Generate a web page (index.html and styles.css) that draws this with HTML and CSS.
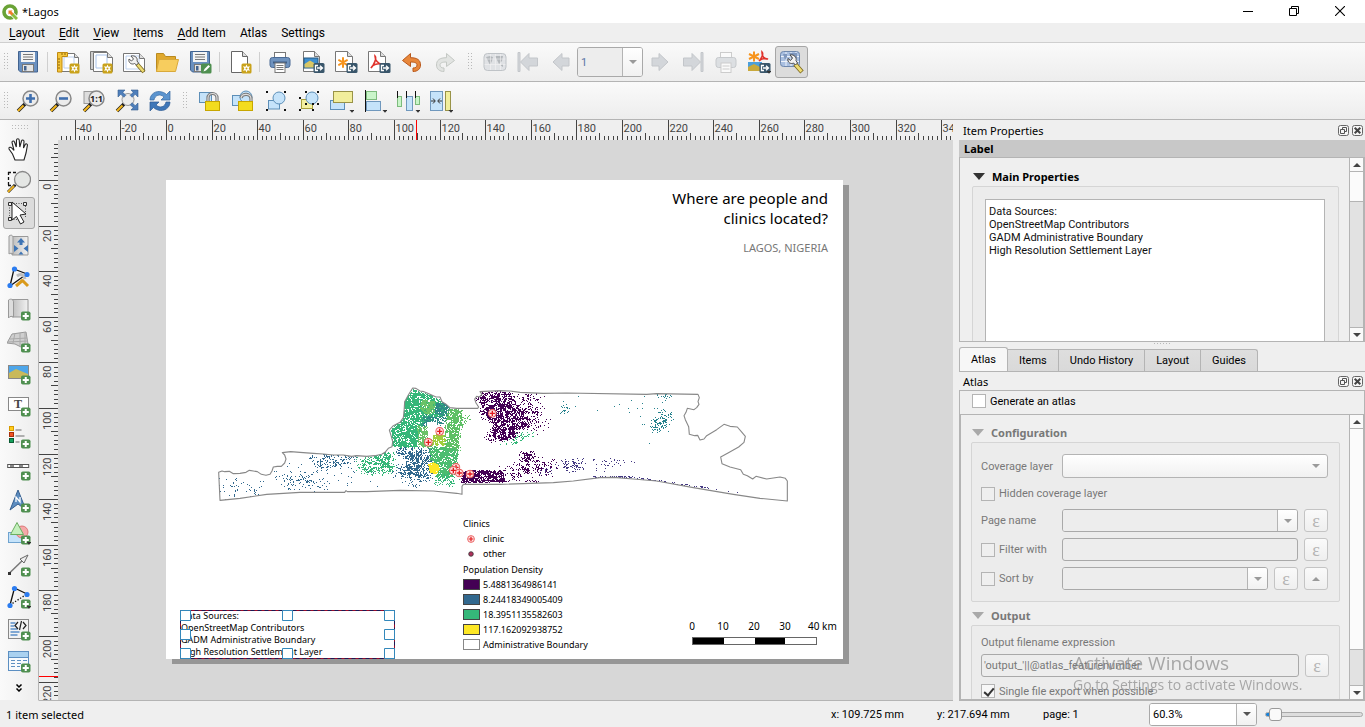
FILE: index.html
```html
<!DOCTYPE html>
<html lang="en">
<head>
<meta charset="utf-8">
<title>*Lagos</title>
<link rel="stylesheet" href="styles.css">
</head>
<body>
<svg class="sprite" aria-hidden="true">
  <defs>
    <linearGradient id="gPaper" x1="0" y1="0" x2="1" y2="0"><stop offset="0" stop-color="#bdbdbd"/><stop offset="1" stop-color="#f2f2f2"/></linearGradient>
    <path id="boundary" transform="translate(-14 -10) scale(.333333)" d="M56 292L66 288 74 290 88 289 100 296 120 295 138 292 148 286 160 288 172 290 184 298 198 301 210 298 216 288 220 276 232 274 244 274 254 264 258 252 254 240 247 233 272 230 300 232 340 235 370 237 400 240 430 240 455 244 470 242 500 244 524 242 545 238 555 232 565 220 576 215 578 200 574 185 568 165 580 152 600 142 610 128 612 110 614 80 625 60 638 39 648 40 660 48 672 50 690 58 708 66 720 66 726 80 736 86 750 98 770 100 833 100 836 96 828 84 824 72 830 64 838 66 846 58 840 50 900 47 930 48 960 52 1030 55 1100 54 1340 58 1370 56 1494 58 1498 68 1494 80 1497 88 1490 98 1482 104 1462 100 1458 112 1452 122 1456 134 1466 155 1468 178 1484 182 1493 181 1500 195 1512 192 1520 182 1550 164 1572 148 1590 154 1612 156 1624 170 1636 184 1632 202 1616 216 1584 234 1562 246 1566 266 1590 276 1622 284 1630 298 1642 302 1658 312 1668 304 1700 312 1740 306 1756 310 1762 318 1762 378 1680 370 1600 358 1480 338 1370 318 1300 312 1240 307 1200 308 1120 318 1060 323 900 328 790 328 786 334 786 358 770 355 700 348 600 346 500 350 442 350 438 347 434 352 300 352 200 358 120 370 60 376z"/>
    <clipPath id="land"><use href="#boundary"/></clipPath>
  </defs>
  <symbol id="b-new" viewBox="0 0 24 24"><rect x="13.500" y="13.500" width="10" height="10" rx="1.500" fill="#c9a21a"/><path d="M18.500 14.500l1 2.200 2.500-.5-1.300 2.300 1.300 2.200-2.500-.4-1 2.300-1-2.300-2.500.4 1.300-2.200-1.300-2.300 2.500.5z" fill="#fff"/><circle cx="18.500" cy="18.500" r="1" fill="#c9a21a"/></symbol>
  <symbol id="b-exp" viewBox="0 0 24 24"><rect x="12.500" y="13" width="11" height="10" rx="1.500" fill="#39566b"/><path d="M17 15.500h-2.500v5H17M16 18h5.500M19 15.800l2.500 2.200-2.500 2.200" fill="none" stroke="#fff" stroke-width="1.300"/></symbol>
  <symbol id="b-plus" viewBox="0 0 24 24"><rect x="14" y="14.500" width="9.500" height="9" rx="1.800" fill="#4f8f50"/><path d="M18.750 16v6M15.700 19h6.100" stroke="#fff" stroke-width="2"/></symbol>
  <symbol id="b-drop" viewBox="0 0 24 24"><path d="M19.500 21h5l-2.500 2.700z" fill="#333"/></symbol>
  <symbol id="b-mag" viewBox="0 0 24 24"><path d="M9 15l-7 7" stroke="#222" stroke-width="3.600"/><path d="M7.500 16.500L2 22" stroke="#f2b51d" stroke-width="2.200"/><circle cx="14.500" cy="9.500" r="7.500" fill="#ececec" stroke="#888" stroke-width="1.500"/></symbol>

  <symbol id="save" viewBox="0 0 24 24"><path d="M2.500 1.500h19v20.500H4.500l-2-2z" fill="#6a90c0" stroke="#42638f"/><rect x="5" y="2" width="14" height="10" fill="#f4f4f4"/><path d="M7 4.500h10M7 7h10M7 9.500h10" stroke="#777"/><rect x="6.500" y="14.500" width="11" height="7" fill="#e4e4e4" stroke="#777"/><rect x="8" y="16" width="2.500" height="4.500" fill="#42638f"/></symbol>
  <symbol id="newlayout" viewBox="0 0 24 24"><path d="M3.500 3.500h15l4 4v14h-19z" fill="#fff" stroke="#777"/><path d="M8 7h10v11H8z" fill="none" stroke="#bcd0ee"/><path d="M18.500 3.500v4h4" fill="#ddd" stroke="#777"/><path d="M1.500 2.500h10v4h-5.500v15.500h-4.500z" fill="#f4c63c" stroke="#c08a10"/><path d="M2 9h2M2 12h2M2 15h2M2 18h2M6 3v2M9 3v2" stroke="#8d670b"/><use href="#b-new"/></symbol>
  <symbol id="dup" viewBox="0 0 24 24"><path d="M1.500 1.500h16v18h-16z" fill="#ccc" stroke="#777"/><path d="M4.500 2.500h14l5 5v14h-19z" fill="#fff" stroke="#777"/><path d="M7 5h11v13H7z" fill="none" stroke="#a9c3ea"/><path d="M18.500 2.500v5h5" fill="#ddd" stroke="#777"/><use href="#b-new"/></symbol>
  <symbol id="manager" viewBox="0 0 24 24"><path d="M1.500 3.500h16l5 5v13h-21z" fill="#fff" stroke="#777"/><path d="M4 6h13v13H4z" fill="none" stroke="#bcd0ee"/><path d="M17.500 3.500v5h5" fill="#ddd" stroke="#777"/><path d="M15 14l7 8" stroke="#7c6820" stroke-width="4"/><path d="M15.500 14.500l6 7" stroke="#eedc72" stroke-width="2.500"/><path d="M9 6l2.500 3-2 2L7 9c-1 4 3 6 5.500 4.500l2 1.500 2-2-1.500-2c1-3-2-6-6-5z" fill="#f2f2f2" stroke="#555"/></symbol>
  <symbol id="open" viewBox="0 0 24 24"><path d="M1.500 21.500v-18h7l2 3h10v5" fill="#e0a92e" stroke="#b98a20"/><path d="M4 9.500h19.500l-3 12h-19z" fill="#f7cd5e" stroke="#d9a93a"/></symbol>
  <symbol id="saveas" viewBox="0 0 24 24"><use href="#save"/><rect x="13" y="13.500" width="10.500" height="10" rx="1.500" fill="#4f8f50"/><path d="M15.500 21.500l1-2.500 4-4 1.500 1.500-4 4z" fill="#fff"/></symbol>
  <symbol id="newpage" viewBox="0 0 24 24"><path d="M3.500 1.500h11l5 5v16h-16z" fill="#fff" stroke="#666"/><path d="M14.500 1.500v5h5" fill="#ddd" stroke="#666"/><use href="#b-new"/></symbol>
  <symbol id="print" viewBox="0 0 24 24"><rect x="6.500" y="2.500" width="11" height="6" fill="#fff" stroke="#777"/><rect x="2" y="7.500" width="20" height="10" rx="2.500" fill="#6f93bf" stroke="#4a6a95"/><path d="M5 12.500h14" stroke="#3f5d85" stroke-width="2"/><rect x="7" y="13" width="10" height="9.500" fill="#fff" stroke="#777"/><path d="M8.500 15.500h7M8.500 17.500h7M8.500 19.500h7" stroke="#777"/></symbol>
  <symbol id="eximg" viewBox="0 0 24 24"><path d="M2.500 1.500h11l5 5v15h-16z" fill="#fff" stroke="#777"/><path d="M13.500 1.500v5h5" fill="#ddd" stroke="#777"/><rect x="3" y="8" width="14" height="10" fill="#3e8fd0" stroke="#27587f"/><path d="M3.500 17.500v-3.500l5.500-3.500 7.500 4.500v2.500z" fill="#d9c765"/><use href="#b-exp"/></symbol>
  <symbol id="exsvg" viewBox="0 0 24 24"><path d="M1.500 1.500h12l5 5v15h-17z" fill="#fff" stroke="#777"/><path d="M13.500 1.500v5h5" fill="#ddd" stroke="#777"/><path d="M9 8v9M5 10.200l8 4.600M5 14.800l8-4.600" stroke="#f7941d" stroke-width="2" stroke-linecap="round"/><use href="#b-exp"/></symbol>
  <symbol id="expdf" viewBox="0 0 24 24"><path d="M1.500 1.500h12l5 5v15h-17z" fill="#fff" stroke="#777"/><path d="M13.500 1.500v5h5" fill="#ddd" stroke="#777"/><path d="M8 6c2 2-1 9-4 12 1-3 6-5 11-4-4 0-7-4-7-8z" fill="none" stroke="#e0332c" stroke-width="1.600"/><use href="#b-exp"/></symbol>
  <symbol id="undo" viewBox="0 0 24 24"><path d="M2.500 10.500l8-7v4.200c7 0 10 2.500 10 7.300 0 4-3 6.500-7.500 6.500v-3.500c2.500 0 4-1 4-3s-2-3-6.500-3v4.500z" fill="#e8873b" stroke="#b9581b"/></symbol>
  <symbol id="redo" viewBox="0 0 24 24"><path d="M21.500 10.500l-8-7v4.200c-7 0-10 2.500-10 7.300 0 4 3 6.500 7.500 6.500v-3.500c-2.500 0-4-1-4-3s2-3 6.500-3v4.500z" fill="#e2e4e2" stroke="#c4c8c4"/></symbol>
  <symbol id="atlasprev" viewBox="0 0 24 24"><rect x="1" y="3.500" width="22" height="17" rx="3.500" fill="#e0e2e5" stroke="#bfc3c7"/><path d="M3 7l4-1 3 1-1 4-2 4-2-4zM12 6h8l-1 5-3 3-2-4zM17 15l3-1v3z" fill="#b4b8bc"/><path d="M7.500 4v16M12.500 4v16M17.500 4v16M1.500 9h21M1.500 14.500h21" stroke="#f3f3f3" stroke-width=".6"/></symbol>
  <symbol id="first" viewBox="0 0 24 24"><path d="M2 2.500h2v19H2z" fill="#d3d6da" stroke="#c3c6ca"/><path d="M4.500 12L13 3.500V8h8.500v8H13v4.500z" fill="#d3d6da" stroke="#c3c6ca"/></symbol>
  <symbol id="prev" viewBox="0 0 24 24"><path d="M4 12l9-8.500V8h7v8h-7v4.500z" fill="#d3d6da" stroke="#c3c6ca"/></symbol>
  <symbol id="next" viewBox="0 0 24 24"><path d="M20 12l-9-8.500V8H4v8h7v4.500z" fill="#d3d6da" stroke="#c3c6ca"/></symbol>
  <symbol id="last" viewBox="0 0 24 24"><path d="M20 2.500h2v19h-2z" fill="#d3d6da" stroke="#c3c6ca"/><path d="M19.500 12L11 3.500V8H2.500v8H11v4.500z" fill="#d3d6da" stroke="#c3c6ca"/></symbol>
  <symbol id="printoff" viewBox="0 0 24 24"><rect x="6.500" y="2.500" width="11" height="6" fill="#fafafa" stroke="#ccc"/><rect x="2" y="7.500" width="20" height="10" rx="2.500" fill="#dcdfe2" stroke="#c6c9cc"/><rect x="7" y="13" width="10" height="9.500" fill="#fafafa" stroke="#ccc"/><path d="M8.500 16h7M8.500 19h7" stroke="#ccc"/></symbol>
  <symbol id="exatlas" viewBox="0 0 24 24"><path d="M7 1.500v10M2 4l10 5M2 9l10-5" stroke="#f7941d" stroke-width="2"/><path d="M15 2c2 2-1 7-3 9 2-2 6-3 9-2-4 0-6-3-6-7z" fill="none" stroke="#e0332c" stroke-width="1.600"/><rect x="1" y="12" width="14" height="9" fill="#4b9fdc"/><path d="M1 21v-4l6-3 8 4v3z" fill="#c9a93c"/><use href="#b-exp"/><use href="#b-drop"/></symbol>
  <symbol id="atlasset" viewBox="0 0 24 24"><rect x=".5" y="1.500" width="19" height="15" rx="3" fill="#a9bfe0" stroke="#6f88ad"/><path d="M6 2v14M11 2v14M16 2v14M1 6.500h18M1 11.500h18" stroke="#eef3fa"/><path d="M3 4l4 0 0 3-2 3zM9 3h8v5l-4 3z" fill="#7f97bd"/><path d="M15 14l7 8" stroke="#7c6820" stroke-width="4.500"/><path d="M15.500 14.500l6 7" stroke="#eedc72" stroke-width="2.800"/><path d="M10 5l2.500 3-2 2.500L8 8.500c-1 4 3 6 5.500 4.500l2 2 2-2-1.500-2.500c1-3-2-6.500-6-5.500z" fill="#f2f2f2" stroke="#444"/></symbol>

  <symbol id="zin" viewBox="0 0 24 24"><use href="#b-mag"/><path d="M14.500 5v9M10 9.500h9" stroke="#3f6fae" stroke-width="2.600"/></symbol>
  <symbol id="zout" viewBox="0 0 24 24"><use href="#b-mag"/><path d="M10 9.500h9" stroke="#3f6fae" stroke-width="2.600"/></symbol>
  <symbol id="z11" viewBox="0 0 24 24"><rect x="2" y="2.500" width="13" height="12" fill="#ddd" stroke="#999"/><use href="#b-mag"/><text x="14.500" y="13" text-anchor="middle" font-family="Noto Sans, sans-serif" font-size="9" font-weight="700" fill="#222">1:1</text></symbol>
  <symbol id="zfull" viewBox="0 0 24 24"><path d="M9 15l-7 7" stroke="#222" stroke-width="3.600"/><path d="M7.500 16.500L2 22" stroke="#f2b51d" stroke-width="2.200"/><circle cx="13" cy="10.500" r="6" fill="#ececec" stroke="#999"/><g fill="#4f7fbb" stroke="#335c8f" stroke-width=".6"><path d="M3 1h7L7.800 3.300l3 3-2 2-3-3L3 8z"/><path d="M23 1h-7l2.200 2.300-3 3 2 2 3-3L23 8z"/><path d="M23 21h-7l2.200-2.300-3-3 2-2 3 3L23 14z"/></g></symbol>
  <symbol id="refresh" viewBox="0 0 24 24"><path d="M2 11c0-6 6-10 12-8 2 .5 3.500 1.500 4.500 2.500L22 2v9h-9l3-3C12 4.500 7 6 6 11z" fill="#5b94cf" stroke="#3568a2" stroke-width=".7"/><path d="M22 13c0 6-6 10-12 8-2-.5-3.500-1.500-4.500-2.500L2 22v-9h9l-3 3c4 3.500 9 2 10-3z" fill="#3f77b8" stroke="#2c5a92" stroke-width=".7"/></symbol>
  <symbol id="lock" viewBox="0 0 24 24"><rect x="1.500" y="3.500" width="12" height="10" fill="#c5e3fa" stroke="#5d8fb8"/><path d="M10 13v-4c0-6 9-6 9 0v4" fill="none" stroke="#777" stroke-width="3.200"/><path d="M10 13v-4c0-6 9-6 9 0v4" fill="none" stroke="#ddd" stroke-width="1.200"/><rect x="7.500" y="12.500" width="14" height="9" fill="#f3dc1f" stroke="#c7a600"/></symbol>
  <symbol id="unlock" viewBox="0 0 24 24"><rect x="1.500" y="6.500" width="11" height="10" fill="#c5e3fa" stroke="#5d8fb8"/><circle cx="15" cy="8" r="6" fill="#c5e3fa" stroke="#5d8fb8"/><path d="M10 9c1-5 10-5 10 1v3" fill="none" stroke="#777" stroke-width="3.200"/><path d="M10 9c1-5 10-5 10 1v3" fill="none" stroke="#ddd" stroke-width="1.200"/><rect x="7.500" y="12.500" width="14" height="9" fill="#f3dc1f" stroke="#c7a600"/></symbol>
  <symbol id="group" viewBox="0 0 24 24"><rect x="4.500" y="11.500" width="11" height="8.500" fill="#c5e3fa" stroke="#5d8fb8"/><circle cx="15" cy="9" r="6" fill="#c5e3fa" stroke="#5d8fb8"/><path d="M2 2h2v2H2zM20 2h2v2h-2zM2 20h2v2H2zM20 20h2v2h-2z" fill="#111"/></symbol>
  <symbol id="ungroup" viewBox="0 0 24 24"><rect x="4.500" y="10.500" width="11" height="9" fill="#f4f0a0" stroke="#a79f3c"/><circle cx="15" cy="9" r="6" fill="#c5e3fa" stroke="#5d8fb8"/><path d="M2 8h2v2H2zM8 2h2v2H8zM20 2h2v2h-2zM2 20h2v2H2zM15 20h2v2h-2zM20 14h2v2h-2zM15 14h2v2h-2zM8 14h2v2H8z" fill="#111"/></symbol>
  <symbol id="raise" viewBox="0 0 24 24"><rect x=".5" y="11.500" width="14" height="9" fill="#c5e3fa" stroke="#5d8fb8"/><rect x="3.500" y="2.500" width="19" height="11" fill="#f2ee9c" stroke="#999348"/><use href="#b-drop"/></symbol>
  <symbol id="align" viewBox="0 0 24 24"><rect x="3.500" y="2.500" width="10" height="8" fill="#c9f5c9" stroke="#7dbb7d"/><rect x="3.500" y="12.500" width="14" height="9" fill="#c5e3fa" stroke="#7098bd"/><path d="M2.500 1v22" stroke="#111"/><use href="#b-drop"/></symbol>
  <symbol id="distribute" viewBox="0 0 24 24"><rect x="1.500" y="7.500" width="4" height="10" fill="#c9f5c9" stroke="#7dbb7d"/><rect x="10.500" y="7.500" width="6" height="14" fill="#c5e3fa" stroke="#7098bd"/><rect x="19.500" y="7.500" width="4" height="8" fill="#c9f5c9" stroke="#7dbb7d"/><path d="M1.500 2v7M10.500 2v7M19.500 2v7" stroke="#111"/><use href="#b-drop"/></symbol>
  <symbol id="resize" viewBox="0 0 24 24"><rect x="1.500" y="2.500" width="12" height="19" fill="#c5e3fa" stroke="#7098bd"/><rect x="16.500" y="2.500" width="5" height="19" fill="#f2ee9c" stroke="#999348"/><path d="M2 12h4M4 9.500L6.300 12 4 14.500M13 12H9M11 9.500L8.700 12l2.300 2.500" fill="none" stroke="#333"/><use href="#b-drop"/></symbol>

  <symbol id="pan" viewBox="0 0 24 24"><path d="M8 23l-2.500-6-3.500-5c-.5-1.800 1.600-2.300 2.700-1L7 13.500 5 5.500c-.2-1.700 2-2 2.500-.5L9.300 10 9.500 3c.2-1.700 2.500-1.700 2.700 0L12.800 10l1.700-6c.5-1.500 2.600-1.200 2.500.5L16.500 11l1.700-3.500c.8-1.300 2.500-.6 2.200.9L19 16l-2 7z" fill="#fff" stroke="#222" stroke-width="1.100"/></symbol>
  <symbol id="zoomt" viewBox="0 0 24 24"><path d="M1 3.500h10M1.500 3v14M1 16.500h8" stroke="#111" stroke-width="1.300" stroke-dasharray="3 2"/><path d="M8 16l-7 7" stroke="#333" stroke-width="3"/><path d="M7 17l-6 6" stroke="#f2b51d" stroke-width="1.800"/><circle cx="15.500" cy="10.500" r="8" fill="#e4e6e4" stroke="#888" stroke-width="1.300"/></symbol>
  <symbol id="select" viewBox="0 0 24 24"><path d="M4 2.500h15M4 18.500h12M2.500 4v14M18.500 5v11" stroke="#555" stroke-dasharray="1 1.500"/><path d="M1.500 1.500h3v3h-3zM16.500 1.500h3v3h-3zM1.500 16.500h3v3h-3z" fill="#eee" stroke="#333"/><path d="M5 1l14 12-6 1 4 7-3.500 2-4-7.500L5 19z" fill="#fff" stroke="#222"/></symbol>
  <symbol id="movec" viewBox="0 0 24 24"><path d="M5 3.500h16v18.500H5z" fill="url(#gPaper)" stroke="#999"/><path d="M2 3c3-2 4 0 4 2v16c-1-1-3-1-4 0z" fill="#ddd" stroke="#999"/><g fill="#3d74b5"><path d="M14 5l4 4.500h-2.500v2.500h-3V9.500H10zM7 12l4.500 3.500L7 19zM21 12l-4.500 3.500L21 19zM11.500 21.500l2.500-3 2.500 3z"/></g></symbol>
  <symbol id="nodes" viewBox="0 0 24 24"><path d="M7 4L3 21M7 4l13 5M3 21L17 11" stroke="#111" stroke-width="1.300" fill="none"/><path d="M21 21l-6-6M9 21l7-6" stroke="#d99a1c" stroke-width="3"/><path d="M10 11c4-3 7-1 8 3" stroke="#bbb" stroke-width="3" fill="none"/><g fill="#2b7cf0"><circle cx="7.500" cy="4" r="2.600"/><circle cx="20" cy="9.500" r="2.600"/><circle cx="3" cy="20.500" r="2.600"/></g></symbol>
  <symbol id="addmap" viewBox="0 0 24 24"><path d="M5 2.500h16V20H5z" fill="url(#gPaper)" stroke="#999"/><path d="M1.500 3c3-2 5 0 5 2v15c-1-1-4-1-5 1z" fill="#ddd" stroke="#999"/><use href="#b-plus"/></symbol>
  <symbol id="add3d" viewBox="0 0 24 24"><path d="M0 14l5-9 14-2 2 12-7 3-6-3z" fill="#cfcfcf" stroke="#999"/><path d="M3 10l17-1M8 4l-2 10M13 4v13M18 4v13M1 13l20-1" stroke="#aaa" fill="none"/><use href="#b-plus"/></symbol>
  <symbol id="addimg" viewBox="0 0 24 24"><rect x="1.500" y="4.500" width="20" height="13" fill="#4ea6ea" stroke="#888"/><path d="M2 17v-5l7-4 12 5v4z" fill="#c9b95a"/><use href="#b-plus"/></symbol>
  <symbol id="addlabel" viewBox="0 0 24 24"><rect x="1.500" y="4.500" width="20" height="13" fill="#fff" stroke="#888"/><text x="11" y="15" text-anchor="middle" font-family="Liberation Serif, serif" font-size="12" font-weight="700" fill="#444">T</text><use href="#b-plus"/></symbol>
  <symbol id="addlegend" viewBox="0 0 24 24"><rect x="2.500" y="1.500" width="4" height="4" fill="#ffcc1c" stroke="#d79b00"/><rect x="2.500" y="7.500" width="4" height="4" fill="#f05423" stroke="#a62f0c"/><rect x="2.500" y="13.500" width="4" height="4" fill="#13a05b" stroke="#0b5c34"/><path d="M8.500 5h6M8.500 11h9M8.500 17h4" stroke="#999" stroke-width="1.600"/><use href="#b-plus"/></symbol>
  <symbol id="addscale" viewBox="0 0 24 24"><rect x=".7" y="7.500" width="21" height="3" fill="#fff" stroke="#555"/><path d="M3 9h4M12 9h4" stroke="#888" stroke-width="2"/><use href="#b-plus"/></symbol>
  <symbol id="addnorth" viewBox="0 0 24 24"><path d="M11 1L3 21l8-6 8 6z" fill="#5d8dc0" stroke="#355f8f"/><path d="M9 13V8l4 5V8" stroke="#fff" fill="none" stroke-width="1.300"/><use href="#b-plus"/></symbol>
  <symbol id="addshape" viewBox="0 0 24 24"><rect x="1.500" y="11.500" width="15" height="10" fill="#c5e3fa" stroke="#6fa3cf"/><circle cx="15" cy="11" r="6" fill="#f5a9a9" stroke="#d77"/><path d="M10 1.500l6.500 12h-13z" fill="#c4f0bd" stroke="#6cae62"/><use href="#b-plus"/><use href="#b-drop"/></symbol>
  <symbol id="addarrow" viewBox="0 0 24 24"><path d="M2 20.500L16 7" stroke="#777" stroke-width="1.500"/><path d="M21 2l-8 4 4 4z" fill="#eee" stroke="#666"/><rect x="1" y="19" width="3" height="3" fill="#333"/><use href="#b-plus"/></symbol>
  <symbol id="addnode" viewBox="0 0 24 24"><path d="M7.500 3L3 20M7.500 3L20 9" stroke="#111" stroke-width="1.300"/><path d="M3 20L20 9" stroke="#111" stroke-width="1.300" stroke-dasharray="1.300 1.700"/><g fill="#2b7cf0"><circle cx="7.500" cy="3.500" r="2.600"/><circle cx="20" cy="9.500" r="2.600"/><circle cx="3" cy="20.500" r="2.600"/></g><use href="#b-plus"/><use href="#b-drop"/></symbol>
  <symbol id="addhtml" viewBox="0 0 24 24"><rect x="1.500" y="2.500" width="20" height="19" fill="#f3f3f3" stroke="#888"/><path d="M3.500 6h5M3.500 9h4M3.500 12h7M3.500 15h9M3.500 18h7" stroke="#5c90c9" stroke-width="1.700"/><path d="M11 5L8 8.500l3 3.500M16 5l3 3.500-3 3.500M14.500 4l-2 9" fill="none" stroke="#222" stroke-width="1.200"/><use href="#b-plus"/></symbol>
  <symbol id="addtable" viewBox="0 0 24 24"><rect x="1.500" y="2.500" width="20" height="19" fill="#f7fafd" stroke="#5c8fc2"/><rect x="2" y="3" width="19" height="5" fill="#a9d1f0"/><path d="M2 8.500h19" stroke="#5c8fc2"/><path d="M4 11.500h4M10 11.500h4M16 11.500h4M4 14.500h4M10 14.500h4M4 17.500h4M10 17.500h3" stroke="#5c8fc2"/><use href="#b-plus"/></symbol>
  <symbol id="clinic" viewBox="0 0 8 8"><circle cx="4" cy="4" r="3.400" fill="#fde4e4" stroke="#ea5a5a" stroke-width=".9"/><path d="M4 1.700v4.600M1.700 4h4.600" stroke="#e31a1c" stroke-width="1.200"/></symbol>
  <symbol id="float" viewBox="0 0 11 11"><rect x=".5" y=".5" width="10" height="10" rx="2" fill="#f6f6f6" stroke="#666"/><path d="M4.500 4.500v-2h4v4h-2M2.500 4.500h4v4h-4z" fill="none" stroke="#555"/></symbol>
  <symbol id="close" viewBox="0 0 11 11"><rect x=".5" y=".5" width="10" height="10" rx="2" fill="#f6f6f6" stroke="#666"/><path d="M2.700 2.700l5.600 5.600M8.300 2.700L2.700 8.300" stroke="#444" stroke-width="2"/></symbol>
</svg>

<header class="titlebar">
  <svg class="logo" viewBox="0 0 16 16"><circle cx="8" cy="8" r="6" fill="none" stroke="#6aa336" stroke-width="3.600"/><path d="M9 9l5.500 5.500" stroke="#fff" stroke-width="4.500"/><path d="M10 10l5 5" stroke="#8cbf3f" stroke-width="3"/><path d="M6.500 6.500h4l-1 1 2 2-2 2-2-2-1 1z" fill="#ee7d2b"/></svg>
  <span class="caption">*Lagos</span>
  <div class="wincontrols">
    <button aria-label="Minimize"><svg viewBox="0 0 10 10"><path d="M0 5.500h10" stroke="#000"/></svg></button>
    <button aria-label="Restore"><svg viewBox="0 0 10 10"><path d="M.5 2.500h7v7h-7zM2.500 2.500v-2h7v7h-2" fill="none" stroke="#000"/></svg></button>
    <button aria-label="Close"><svg viewBox="0 0 10 10"><path d="M0 0l10 10M10 0L0 10" stroke="#000" stroke-width="1.100"/></svg></button>
  </div>
</header>

<nav class="menubar">
  <button><u>L</u>ayout</button><button><u>E</u>dit</button><button><u>V</u>iew</button><button><u>I</u>tems</button><button><u>A</u>dd Item</button><button>Atlas</button><button>Settings</button>
</nav>

<div class="toolbar">
  <i class="grip"></i>
  <button class="tool" aria-label="Save project"><svg><use href="#save"/></svg></button>
  <i class="sep"></i>
  <button class="tool" aria-label="New layout"><svg><use href="#newlayout"/></svg></button>
  <button class="tool" aria-label="Duplicate layout"><svg><use href="#dup"/></svg></button>
  <button class="tool" aria-label="Layout manager"><svg><use href="#manager"/></svg></button>
  <button class="tool" aria-label="Add from template"><svg><use href="#open"/></svg></button>
  <button class="tool" aria-label="Save as template"><svg><use href="#saveas"/></svg></button>
  <i class="sep"></i>
  <button class="tool" aria-label="Add pages"><svg><use href="#newpage"/></svg></button>
  <i class="sep"></i>
  <button class="tool" aria-label="Print"><svg><use href="#print"/></svg></button>
  <button class="tool" aria-label="Export as image"><svg><use href="#eximg"/></svg></button>
  <button class="tool" aria-label="Export as SVG"><svg><use href="#exsvg"/></svg></button>
  <button class="tool" aria-label="Export as PDF"><svg><use href="#expdf"/></svg></button>
  <button class="tool" aria-label="Undo"><svg><use href="#undo"/></svg></button>
  <button class="tool" aria-label="Redo" disabled><svg><use href="#redo"/></svg></button>
  <i class="grip"></i>
  <button class="tool" aria-label="Preview atlas" disabled><svg><use href="#atlasprev"/></svg></button>
  <button class="tool" aria-label="First feature" disabled><svg><use href="#first"/></svg></button>
  <button class="tool" aria-label="Previous feature" disabled><svg><use href="#prev"/></svg></button>
  <div class="combo page-combo"><input aria-label="Atlas page" value="1" disabled><button class="drop" aria-label="Choose page" disabled></button></div>
  <button class="tool" aria-label="Next feature" disabled><svg><use href="#next"/></svg></button>
  <button class="tool" aria-label="Last feature" disabled><svg><use href="#last"/></svg></button>
  <button class="tool" aria-label="Print atlas" disabled><svg><use href="#printoff"/></svg></button>
  <button class="tool" aria-label="Export atlas"><svg><use href="#exatlas"/></svg></button>
  <button class="tool active" aria-label="Atlas settings"><svg><use href="#atlasset"/></svg></button>
</div>

<div class="toolbar">
  <i class="grip"></i>
  <button class="tool" aria-label="Zoom in"><svg><use href="#zin"/></svg></button>
  <button class="tool" aria-label="Zoom out"><svg><use href="#zout"/></svg></button>
  <button class="tool" aria-label="Zoom to 100%"><svg><use href="#z11"/></svg></button>
  <button class="tool" aria-label="Zoom full"><svg><use href="#zfull"/></svg></button>
  <button class="tool" aria-label="Refresh view"><svg><use href="#refresh"/></svg></button>
  <i class="grip"></i>
  <button class="tool" aria-label="Lock items"><svg><use href="#lock"/></svg></button>
  <button class="tool" aria-label="Unlock all"><svg><use href="#unlock"/></svg></button>
  <button class="tool" aria-label="Group"><svg><use href="#group"/></svg></button>
  <button class="tool" aria-label="Ungroup"><svg><use href="#ungroup"/></svg></button>
  <button class="tool" aria-label="Raise items"><svg><use href="#raise"/></svg></button>
  <button class="tool" aria-label="Align items"><svg><use href="#align"/></svg></button>
  <button class="tool" aria-label="Distribute items"><svg><use href="#distribute"/></svg></button>
  <button class="tool" aria-label="Resize items"><svg><use href="#resize"/></svg></button>
</div>

<main class="work">
  <div class="toolbox">
    <i class="grip-h"></i>
    <button class="tool" aria-label="Pan"><svg><use href="#pan"/></svg></button>
    <button class="tool" aria-label="Zoom"><svg><use href="#zoomt"/></svg></button>
    <button class="tool active" aria-label="Select item"><svg><use href="#select"/></svg></button>
    <button class="tool" aria-label="Move content"><svg><use href="#movec"/></svg></button>
    <button class="tool" aria-label="Edit nodes"><svg><use href="#nodes"/></svg></button>
    <button class="tool" aria-label="Add map"><svg><use href="#addmap"/></svg></button>
    <button class="tool" aria-label="Add 3D map"><svg><use href="#add3d"/></svg></button>
    <button class="tool" aria-label="Add picture"><svg><use href="#addimg"/></svg></button>
    <button class="tool" aria-label="Add label"><svg><use href="#addlabel"/></svg></button>
    <button class="tool" aria-label="Add legend"><svg><use href="#addlegend"/></svg></button>
    <button class="tool" aria-label="Add scale bar"><svg><use href="#addscale"/></svg></button>
    <button class="tool" aria-label="Add north arrow"><svg><use href="#addnorth"/></svg></button>
    <button class="tool" aria-label="Add shape"><svg><use href="#addshape"/></svg></button>
    <button class="tool" aria-label="Add arrow"><svg><use href="#addarrow"/></svg></button>
    <button class="tool" aria-label="Add node item"><svg><use href="#addnode"/></svg></button>
    <button class="tool" aria-label="Add HTML"><svg><use href="#addhtml"/></svg></button>
    <button class="tool" aria-label="Add attribute table"><svg><use href="#addtable"/></svg></button>
    <button class="more" aria-label="More tools"><svg viewBox="0 0 8 8"><path d="M1.500 .5L4 3 6.500 .5M1.500 4.500L4 7l2.500-2.500" fill="none" stroke="#000" stroke-width="1.500"/></svg></button>
  </div>

  <div class="view">
    <div class="corner"></div>
    <svg class="ruler-h" id="rulerH"></svg>
    <svg class="ruler-v" id="rulerV"></svg>
    <div class="canvas">
      <div class="page">
        <svg class="map" viewBox="0 0 580 122">
          <g id="dots" shape-rendering="crispEdges" clip-path="url(#land)"></g>
          <use href="#boundary" fill="none" stroke="#888" stroke-width="3.300" stroke-linejoin="round"/>
          <g id="clinics"></g>
        </svg>
        <h1 class="map-title">Where are people and clinics located?</h1>
        <p class="map-sub">LAGOS, NIGERIA</p>
        <div class="legend">
          <h2>Clinics</h2>
          <p><svg class="mark" viewBox="0 0 8 8"><use href="#clinic"/></svg>clinic</p>
          <p><svg class="mark" viewBox="0 0 8 8"><circle cx="4" cy="4" r="2.300" fill="#b0305c" stroke="#333" stroke-width=".8"/></svg>other</p>
          <h2>Population Density</h2>
          <p><i class="swatch purple"></i>5.4881364986141</p>
          <p><i class="swatch blue"></i>8.24418349005409</p>
          <p><i class="swatch green"></i>18.3951135582603</p>
          <p><i class="swatch yellow"></i>117.162092938752</p>
          <p><i class="swatch none"></i>Administrative Boundary</p>
        </div>
        <div class="scalebar">
          <div class="nums"><span>0</span><span>10</span><span>20</span><span>30</span><span>40 km</span></div>
          <div class="bar"><i class="on"></i><i></i><i class="on"></i><i></i></div>
        </div>
        <div class="label-item">
          <p>Data Sources:<br>OpenStreetMap Contributors<br>GADM Administrative Boundary<br>High Resolution Settlement Layer</p>
          <svg class="handles" viewBox="0 0 215 49"><rect x=".5" y=".5" width="214" height="48" fill="none" stroke="#9c0a28"/><rect x=".5" y=".5" width="214" height="48" fill="none" stroke="#1a1a55" stroke-dasharray="4 3"/><g fill="#fff" stroke="#3388bb"><path d="M.5 .5h10v10H.5zM102.500 .5h10v10h-10zM204.500 .5h10v10h-10zM.5 19.500h10v10H.5zM204.500 19.500h10v10h-10zM.5 38.500h10v10H.5zM102.500 38.500h10v10h-10zM204.500 38.500h10v10h-10z"/></g></svg>
        </div>
      </div>
    </div>
  </div>

  <aside class="docks">
    <section class="dock props">
      <div class="dock-title"><span>Item Properties</span><button aria-label="Float"><svg><use href="#float"/></svg></button><button aria-label="Close"><svg><use href="#close"/></svg></button></div>
      <div class="kind">Label</div>
      <div class="scroller">
        <div class="content first">
          <h3><i class="tri"></i>Main Properties</h3>
          <div class="group tall"><textarea aria-label="Label text" spellcheck="false">Data Sources:
OpenStreetMap Contributors
GADM Administrative Boundary
High Resolution Settlement Layer</textarea></div>
        </div>
        <div class="scrollbar"><i class="up"></i><i class="thumb short"></i><i class="track"></i><i class="down"></i></div>
      </div>
    </section>
    <i class="grip-h split"></i>
    <div class="tabs" role="tablist">
      <button role="tab" class="on">Atlas</button><button role="tab">Items</button><button role="tab">Undo History</button><button role="tab">Layout</button><button role="tab">Guides</button>
    </div>
    <section class="dock atlas">
      <div class="dock-title"><span>Atlas</span><button aria-label="Float"><svg><use href="#float"/></svg></button><button aria-label="Close"><svg><use href="#close"/></svg></button></div>
      <label class="check generate"><input type="checkbox">Generate an atlas</label>
      <div class="scroller off">
        <div class="content second">
          <h3><i class="tri"></i>Configuration</h3>
          <div class="group config">
            <div class="row"><label class="name" for="cov">Coverage layer</label><span class="select"><select id="cov" disabled><option></option></select></span></div>
            <div class="row hid"><label class="check"><input type="checkbox" disabled>Hidden coverage layer</label></div>
            <div class="row"><label class="name" for="pn">Page name</label><div class="combo"><input id="pn" disabled><button class="drop" aria-label="Choose field" disabled></button></div><button class="sq" disabled>ε</button></div>
            <div class="row"><label class="check name"><input type="checkbox" disabled>Filter with</label><input class="field" aria-label="Filter expression" disabled><button class="sq" disabled>ε</button></div>
            <div class="row"><label class="check name"><input type="checkbox" disabled>Sort by</label><div class="combo"><input aria-label="Sort expression" disabled><button class="drop" aria-label="Choose sort field" disabled></button></div><button class="sq" disabled>ε</button><button class="sq asc" aria-label="Sort direction" disabled></button></div>
          </div>
          <h3><i class="tri"></i>Output</h3>
          <div class="group output">
            <label for="fn">Output filename expression</label>
            <div class="row"><input class="field" id="fn" value="'output_'||@atlas_featurenumber" disabled><button class="sq" disabled>ε</button></div>
            <label class="check single"><input type="checkbox" checked disabled>Single file export when possible</label>
          </div>
        </div>
        <div class="scrollbar"><i class="up"></i><i class="thumb"></i><i class="track low"></i><i class="down"></i></div>
      </div>
    </section>
  </aside>
</main>

<footer class="status">
  <span class="msg">1 item selected</span>
  <span class="pos">x: 109.725 mm</span>
  <span class="pos">y: 217.694 mm</span>
  <span class="pos">page: 1</span>
  <div class="combo zoom"><input aria-label="Zoom level" value="60.3%"><button class="drop" aria-label="Choose zoom"></button></div>
  <input class="slider" type="range" aria-label="Zoom" min="0" max="100" value="4">
</footer>

<div class="watermark"><strong>Activate Windows</strong><span>Go to Settings to activate Windows.</span></div>
<script src="app.js"></script>
</body>
</html>
```

FILE: styles.css
```css
* { box-sizing: border-box; }
body {
  margin: 0;
  height: 100vh;
  display: flex;
  flex-direction: column;
  overflow: hidden;
  background: #efefef;
  color: #000;
  font: 11px/13px Roboto, "Noto Sans", sans-serif;
}
button, input, select, textarea { font: inherit; color: inherit; margin: 0; padding: 0; border: 0; background: none; border-radius: 0; outline: 0; }
h1, h2, h3, p { margin: 0; font: inherit; }
i { font-style: normal; }
.sprite { position: absolute; width: 0; height: 0; }

.titlebar { display: flex; align-items: center; height: 23px; padding-left: 2px; background: #fff; flex: none; }
.logo { width: 16px; height: 16px; }
.caption { margin-left: 4px; font: 11px/13px "Noto Sans", sans-serif; }
.wincontrols { display: flex; margin-left: auto; padding-right: 2px; }
.wincontrols button { width: 46px; height: 23px; }
.wincontrols svg { width: 10px; height: 10px; display: block; margin: 0 auto 2px; }

.menubar { display: flex; height: 19px; padding-left: 2px; flex: none; align-items: center; }
.menubar button { font-size: 12px; line-height: 18px; padding: 0 7px; }
.menubar u { text-underline-offset: 2px; }

.toolbar { display: flex; align-items: center; height: 39px; flex: none; border-top: 1px solid #cfcfcf; background: linear-gradient(#fafafa, #ededed); }
.toolbar + .toolbar { height: 38px; border-top-color: #b4b4b4; }
.tool { display: flex; align-items: center; justify-content: center; width: 33px; height: 32px; flex: none; border: 1px solid transparent; border-radius: 3px; }
.tool svg { width: 24px; height: 24px; flex: none; }
.tool.active { background: #dcdcdc; border-color: #a6a6a6; }
.sep { width: 1px; height: 20px; margin: 0 3px; background: #cfcfcf; }
.grip { width: 17px; height: 18px; flex: none; background: repeating-linear-gradient(#b9b9b9 0 1px, transparent 1px 3px) 7px 0 / 1px 18px no-repeat, repeating-linear-gradient(#b9b9b9 0 1px, transparent 1px 3px) 10px 0 / 1px 18px no-repeat; }
.grip:first-child { width: 11px; background-position: 4px 0, 7px 0; }
.grip-h { display: block; width: 17px; height: 5px; margin: 5px auto 3px; flex: none; background: repeating-linear-gradient(90deg, #b9b9b9 0 1px, transparent 1px 3px) 0 0 / 17px 1px no-repeat, repeating-linear-gradient(90deg, #b9b9b9 0 1px, transparent 1px 3px) 0 3px / 17px 1px no-repeat; }

.combo { display: flex; min-width: 0; height: 23px; border: 1px solid #a9a9a9; border-radius: 3px; overflow: hidden; background: #fff; }
.combo input { flex: 1; min-width: 0; padding-left: 3px; background: #fff; }
.combo input:disabled { background: #ededed; color: #787878; }
.drop { width: 20px; flex: none; display: flex; align-items: center; justify-content: center; border-left: 1px solid #b4b4b4; background: linear-gradient(#fff, #f1f1f1); }
.drop::after, .select::after { content: ""; border: 4px solid transparent; border-top: 4px solid #555; border-bottom: 0; }
.drop:disabled::after, .select::after { border-top-color: #9a9a9a; }
.page-combo { width: 66px; height: 30px; }
.page-combo input:disabled { color: #5a76a5; }

.work { flex: 1; min-height: 0; display: flex; border-top: 1px solid #b4b4b4; }
.toolbox { width: 39px; flex: none; display: flex; flex-direction: column; border-right: 1px solid #b4b4b4; overflow: hidden; padding-left: 3px; background: linear-gradient(90deg, #fafafa, #ededed); border-bottom: 1px solid #efefef; }
.toolbox .tool { width: 32px; }
.toolbox .grip-h { margin-left: 9px; }
.more { height: 23px; flex: 1; width: 32px; }
.more svg { width: 8px; height: 8px; }

.view { flex: 1; min-width: 0; display: grid; grid-template: 20px 1fr / 19px 1fr; border-bottom: 1px solid #b4b4b4; margin-right: 6px; }
.ruler-h, .ruler-v { width: 100%; height: 100%; overflow: hidden; display: block; min-width: 0; min-height: 0; }
.ruler-h text, .ruler-v text { font: 11px Roboto, sans-serif; fill: #444; }
.canvas { background: #d7d7d7; overflow: hidden; position: relative; min-width: 0; min-height: 0; }
.page { position: absolute; left: 108px; top: 40px; width: 677px; height: 479px; background: #fff; box-shadow: 6px 5px 0 #969696; }
.map { position: absolute; left: 48px; top: 205px; width: 580px; height: 122px; overflow: visible; }
.map-title { position: absolute; right: 15px; top: 8px; width: 170px; font: 15px/20px "Noto Sans", sans-serif; text-align: right; }
.map-sub { position: absolute; right: 15px; top: 61px; color: #777; font-family: "Noto Sans", sans-serif; }
.legend { position: absolute; left: 297px; top: 336px; font: 9px/15px "Noto Sans", sans-serif; white-space: nowrap; }
.legend p { display: flex; align-items: center; }
.legend p + h2 { margin-top: 1px; }
.mark { width: 8px; height: 8px; margin: 0 8px 0 4px; }
.swatch { width: 17px; height: 11px; margin-right: 3px; border: 1px solid #444; }
.swatch.purple { background: #440154; }
.swatch.blue { background: #31688e; }
.swatch.green { background: #35b779; }
.swatch.yellow { background: #fde725; }
.swatch.none { border-color: #888; }
.scalebar { position: absolute; left: 526px; top: 440px; width: 125px; font: 10px/13px "Noto Sans", sans-serif; }
.nums { display: grid; grid-template-columns: repeat(4, 31px) 31px; }
.nums span { justify-self: start; min-width: 16px; margin-left: -8px; text-align: center; white-space: nowrap; }
.bar { display: flex; height: 8px; margin-top: 4px; border: 1px solid #666; }
.bar i { flex: 1; }
.bar .on { background: #000; }
.label-item { position: absolute; left: 14px; top: 430px; width: 215px; height: 49px; font: 9px/12px "Noto Sans", sans-serif; padding-left: 1px; white-space: nowrap; }
.handles { position: absolute; inset: 0; width: 215px; height: 49px; }

.docks { width: 406px; flex: none; display: flex; flex-direction: column; min-height: 0; }
.dock { display: flex; flex-direction: column; min-height: 0; }
.props { height: 222px; flex: none; }
.atlas { flex: 1; }
.dock-title { display: flex; align-items: center; height: 20px; padding: 0 2px 0 4px; gap: 3px; flex: none; font-family: "Noto Sans", sans-serif; }
.atlas .dock-title { height: 18px; }
.dock-title span { flex: 1; }
.dock-title button, .dock-title svg { width: 11px; height: 11px; display: block; }
.kind { height: 17px; padding-left: 5px; font: 700 11px/17px "Noto Sans", sans-serif; background: #c8c8c8; flex: none; }
.scroller { flex: 1; min-height: 0; display: flex; border: 1px solid #b4b4b4; border-right-width: 2px; overflow: hidden; }
.scroller.off { color: #787878; border-left-width: 2px; border-bottom-width: 2px; }
.content { flex: 1; min-width: 0; overflow: hidden; }
.first { padding: 9px 10px 0 12px; }
.second { padding: 8px 9px 0 10px; }
.content h3 { display: flex; align-items: center; height: 19px; padding-left: 1px; font: 700 11px/13px "Noto Sans", sans-serif; }
.tri { border: 6px solid transparent; border-top: 7px solid #333; border-bottom: 0; margin-right: 7px; }
.off .tri { border-top-color: #a9a9a9; }
.group { border: 1px solid #d5d5d5; border-radius: 2px; background: #ececec; }
.group + h3 { margin-top: 4px; }
.tall { height: 200px; padding: 12px 13px 0 12px; }
textarea { display: block; width: 100%; height: 200px; padding: 5px 3px; resize: none; border: 1px solid #b4b4b4; background: #fff; color: #111; line-height: 13px; }
.scrollbar { width: 14px; flex: none; display: flex; flex-direction: column; border-left: 1px solid #b4b4b4; background: #e2e2e2; }
.up, .down { height: 14px; flex: none; display: flex; align-items: center; justify-content: center; background: #fafafa; }
.up { border-bottom: 1px solid #b4b4b4; }
.down { border-top: 1px solid #b4b4b4; }
.up::after, .down::after, .asc::after { content: ""; border: 4px solid transparent; }
.up::after, .asc::after { border-bottom: 4px solid #444; border-top: 0; }
.down::after { border-top: 4px solid #444; border-bottom: 0; }
.thumb { flex: 1; background: #fbfbfb; border-bottom: 1px solid #b4b4b4; }
.thumb.short { flex: 0 0 30px; }
.track { flex: 1; }
.track.low { flex: 0 0 35px; }
.split { margin: 1px auto 2px; height: 2px; }

.tabs { display: flex; align-items: flex-end; height: 25px; flex: none; border-bottom: 1px solid #b4b4b4; }
.tabs button { height: 22px; padding: 0 11px; border: 1px solid #b4b4b4; border-left: 0; border-bottom: 0; background: linear-gradient(#dedede, #d9d9d9); }
.tabs button.on { height: 24px; border-left: 1px solid #b4b4b4; border-radius: 3px 3px 0 0; background: #f7f7f7; }
.tabs button:last-child { border-top-right-radius: 3px; }
.check { display: flex; align-items: center; gap: 4px; white-space: nowrap; }
.check input { appearance: none; width: 14px; height: 14px; flex: none; border: 1px solid #b4b4b4; background: #fff; }
.check input:disabled { background: #efefef; }
.check input:checked { background: #f7f7f7; position: relative; }
.check input:checked::after { content: ""; position: absolute; left: 4px; top: 1px; width: 4px; height: 8px; border: solid #333; border-width: 0 2px 2px 0; rotate: 40deg; }
.generate { height: 24px; padding: 0 0 3px 12px; border: 1px solid #b4b4b4; border-bottom: 0; flex: none; }
.config { padding: 11px 11px 0 9px; height: 160px; }
.output { padding: 10px 10px 0 9px; height: 130px; }
.row { display: flex; align-items: center; gap: 6px; margin-bottom: 6px; }
.row.hid { height: 31px; margin: -6px 0 0; }
.name { width: 76px; flex: none; white-space: nowrap; }
.config .row > :nth-child(2) { flex: 1; }
.config .name { margin-right: -1px; }
.select { display: flex; align-items: center; height: 24px; padding-right: 7px; border: 1px solid #b4b4b4; border-radius: 3px; background: linear-gradient(#fff, #f1f1f1); }
.select select { appearance: none; flex: 1; height: 22px; }
.field { flex: 1; min-width: 0; height: 23px; padding-left: 2px; border: 1px solid #a9a9a9; border-radius: 3px; background: #ededed; color: #787878; }
.row .combo { background: #ededed; }
.sq { display: flex; align-items: center; justify-content: center; width: 24px; height: 23px; flex: none; border: 1px solid #c4c4c4; border-radius: 3px; background: linear-gradient(#fafafa, #efefef); color: #b4b4b4; font: 18px/18px "Liberation Serif", serif; }
.asc::after { border-bottom-color: #9a9a9a; }
.output .row { margin: 5px 0 7px; }

.status { display: flex; align-items: center; height: 26px; padding-right: 2px; flex: none; }
.msg { flex: 1; padding-left: 6px; font-family: "Noto Sans", sans-serif; }
.pos { width: 106px; }
.zoom { width: 108px; }
.slider { appearance: none; width: 98px; height: 14px; margin-left: 8px; }
.slider::-webkit-slider-runnable-track { height: 5px; border: 1px solid #a9a9a9; border-radius: 3px; background: linear-gradient(90deg, #1a82d8 0 8px, #ddd 8px); }
.slider::-webkit-slider-thumb { appearance: none; width: 13px; height: 13px; margin-top: -5px; border: 1px solid #999; border-radius: 3px; background: #fafafa; }

.watermark { position: fixed; right: 57px; bottom: 31px; width: 235px; display: flex; flex-direction: column; color: #828282; opacity: .65; pointer-events: none; white-space: nowrap; font-family: "Open Sans", sans-serif; }
.watermark strong { font-weight: 400; font-size: 19px; line-height: 22px; }
.watermark span { font-size: 14px; line-height: 22px; }
```

FILE: app.js
```js
const NS = "http://www.w3.org/2000/svg";
const PX_PER_MM = 2.28;

function el(parent, name, attrs, text) {
  const node = document.createElementNS(NS, name);
  for (const key in attrs) node.setAttribute(key, attrs[key]);
  if (text !== undefined) node.textContent = text;
  parent.appendChild(node);
}

// Tick marks every 2 mm, longer at 10 mm, full height with a number at 20 mm.
function ruler(svg, origin, size, horizontal, cursor) {
  const box = svg.getBoundingClientRect();
  const end = horizontal ? box.width : box.height;
  let path = "";
  for (let mm = -60; mm <= 2000; mm += 2) {
    const p = Math.round(origin + mm * PX_PER_MM) + 0.5;
    if (p < 0) continue;
    if (p > end) break;
    const len = mm % 20 === 0 ? size : mm % 10 === 0 ? 7 : 4;
    path += horizontal ? `M${p} ${size - len}V${size}` : `M${size - len} ${p}H${size}`;
    if (mm % 20 === 0) {
      if (horizontal) el(svg, "text", { x: p + 1, y: 12 }, mm);
      else el(svg, "text", { transform: `translate(12 ${p + 3}) rotate(-90)`, "text-anchor": "end" }, mm);
    }
  }
  el(svg, "path", { d: path, stroke: "#444", fill: "none" });
  el(svg, "path", { d: horizontal ? `M${cursor} 0V${size}` : `M0 ${cursor}H${size}`, stroke: "#f00" });
}
ruler(document.getElementById("rulerH"), 108, 20, true, 358.5);
ruler(document.getElementById("rulerV"), 40, 19, false, 536.5);

// Settlement cells: [colour, density, clumping, polygon] in thirds of a pixel.
const regions = [
  ["#35b779", .8, .25, [578,215,574,165,610,130,614,80,638,42,690,62,722,75,735,90,750,102,720,130,665,150,650,220]],
  ["#6ac267", .8, .2, [665,72,705,80,705,110,680,120,660,100]],
  ["#2f8a86", .85, .2, [708,85,735,85,750,100,745,125,705,115]],
  ["#2f8a86", .7, .4, [672,122,740,126,725,150,670,152]],
  ["#ffffff", 1, 0, [682,142,710,142,706,188,685,185]],
  ["#6ac267", .75, .25, [652,152,682,155,685,190,700,192,695,218,655,218]],
  ["#5ec065", .75, .3, [750,102,785,105,790,150,780,175,778,230,735,230,735,180,738,130]],
  ["#5ec065", .35, .5, [785,125,820,125,800,145,785,145]],
  ["#a0cf3e", .8, .2, [700,178,738,180,735,212,695,212]],
  ["#4bbd70", .8, .2, [690,212,775,222,772,290,745,310,705,305,718,275,688,258]],
  ["#35b779", .4, .5, [700,300,770,295,765,335,715,325]],
  ["#31688e", .65, .5, [590,220,686,220,686,262,600,245]],
  ["#31688e", .6, .6, [580,300,615,270,640,240,686,250,690,305,640,310]],
  ["#31688e", .25, .6, [600,310,690,305,655,338,620,332]],
  ["#fde725", .95, 0, [684,268,700,262,716,270,720,284,708,298,690,294]],
  ["#35b779", .55, .5, [480,280,505,245,540,236,578,228,580,290,530,298,490,292]],
  ["#35b779", .25, .5, [470,252,510,240,500,290,482,285]],
  ["#31688e", .4, .7, [340,240,465,242,430,270,360,285]],
  ["#31688e", .2, .8, [235,300,330,300,385,335,240,335]],
  ["#31688e", .07, .5, [60,310,200,318,200,354,60,372]],
  ["#31688e", .015, .3, [200,270,480,260,600,340,240,345]],
  ["#440154", .62, .5, [842,50,930,50,970,110,1000,150,960,165,940,195,860,198,880,150,850,125,835,70]],
  ["#440154", .26, .8, [930,50,1020,58,1015,130,1035,150,1000,165,950,120]],
  ["#440154", .8, .3, [785,290,820,285,910,290,912,322,785,324]],
  ["#440154", .42, .8, [910,290,960,265,1050,262,1055,295,960,298,912,308]],
  ["#440154", .7, .5, [963,233,1002,233,998,262,968,258]],
  ["#440154", .3, .3, [910,317,1020,317,1020,321,910,322]],
  ["#443983", .45, .7, [1080,262,1150,258,1148,275,1110,288,1085,278]],
  ["#443983", .25, .8, [1190,258,1285,256,1280,266,1220,278,1195,272]],
  ["#443983", .25, .6, [1020,280,1060,275,1060,298,1030,298]],
  ["#443983", .6, .2, [1180,304,1300,304,1300,310,1180,310]],
  ["#443983", .3, .2, [1300,310,1500,338,1620,354,1500,334,1380,314,1300,306]],
  ["#26828e", .5, .7, [1380,105,1405,120,1405,145,1385,165,1345,160,1350,145,1378,140]],
  ["#26828e", .3, .5, [1380,57,1414,58,1400,72,1380,80]],
  ["#26828e", .25, .5, [1090,85,1105,90,1105,115,1090,118]],
  ["#26828e", .005, 0, [1050,60,1400,62,1350,230,1200,160]],
  ["#35b779", .25, .5, [955,168,1010,175,940,210,895,212,935,195]]
];

let seed = 20201;
function rand() {
  seed = (seed * 1664525 + 1013904223) >>> 0;
  return seed / 4294967296;
}
function inside(poly, x, y) {
  let hit = false;
  for (let i = 0, j = poly.length - 2; i < poly.length; j = i, i += 2) {
    if ((poly[i + 1] > y) !== (poly[j + 1] > y) &&
        x < (poly[j] - poly[i]) * (y - poly[i + 1]) / (poly[j + 1] - poly[i + 1]) + poly[i]) hit = !hit;
  }
  return hit;
}
const coarse = Array.from({ length: 250 * 60 }, rand);
const layer = document.getElementById("dots");
for (const [colour, density, clump, poly] of regions) {
  const xs = poly.filter((_, i) => i % 2 === 0), ys = poly.filter((_, i) => i % 2);
  const spread = clump * clump * 90;
  let d = "";
  for (let y = Math.floor((Math.min(...ys) - spread) / 3); y <= (Math.max(...ys) + spread) / 3; y++) {
    for (let x = Math.floor((Math.min(...xs) - spread) / 3); x <= (Math.max(...xs) + spread) / 3; x++) {
      const n = coarse[Math.floor(y / 3) * 250 + Math.floor(x / 3)];
      const p = density * (1 - clump + clump * 2 * n);
      const jx = (rand() - 0.5) * spread, jy = (rand() - 0.5) * spread * 0.6;
      if (rand() < p && inside(poly, x * 3 + 1.5 + jx, y * 3 + 1.5 + jy)) d += `M${x - 14} ${y - 10}h1v1h-1z`;
    }
  }
  el(layer, "path", { d, fill: colour });
}

const clinics = document.getElementById("clinics");
for (const [x, y] of [[719,169],[685,202],[768,277],[760,286],[778,294],[810,297],[877,115]]) {
  el(clinics, "use", { href: "#clinic", x: x / 3 - 18.5, y: y / 3 - 14.5, width: 9, height: 9 });
}
```
